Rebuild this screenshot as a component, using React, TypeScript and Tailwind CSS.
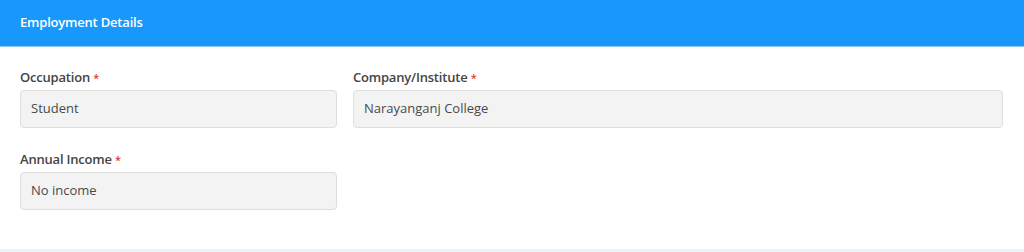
const font = { fontFamily: '"Open Sans", "Noto Sans", sans-serif' }

function Field({ label, value }: { label: string; value: string }) {
  return (
    <div>
      <label className="block text-[13px] font-semibold leading-[18px] tracking-[-0.2px] text-[#444]">
        {label} <span className="text-[#e53935] text-[11px]">*</span>
      </label>
      <div className="mt-[3px] h-[38px] rounded-[4px] border border-[#dedede] bg-[#f3f3f3] px-[10px] flex items-center text-[13px] text-[#4a4a4a]">
        {value}
      </div>
    </div>
  )
}

export default function App() {
  return (
    <div className="w-[1024px] h-[252px] bg-white flex flex-col" style={font}>
      <div className="h-[47px] bg-[#1898fb] border-b border-[#8fcaf5] px-[20px] flex items-center">
        <h2 className="text-[13px] font-semibold tracking-[-0.2px] text-white">Employment Details</h2>
      </div>
      <div className="flex-1 px-[20px] pt-[21px]">
        <div className="grid grid-cols-[317px_650px] gap-x-[16px] gap-y-[22px]">
          <Field label="Occupation" value="Student" />
          <Field label="Company/Institute" value="Narayanganj College" />
          <Field label="Annual Income" value="No income" />
        </div>
      </div>
      <div className="h-[3px] bg-[#eef3f8]" />
    </div>
  )
}
